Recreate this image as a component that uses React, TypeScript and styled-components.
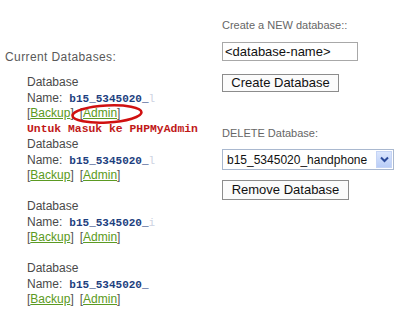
import React, { FC } from 'react';
import styled, { createGlobalStyle } from 'styled-components';

const GlobalStyle = createGlobalStyle`
  body {
    margin: 0;
    background: #ffffff;
    font-family: "Liberation Sans", Arial, sans-serif;
  }
`;

interface DbEntry {
  name: string;
  tail: string;
  note?: string;
}

const databases: DbEntry[] = [
  { name: 'b15_5345020_', tail: 'l', note: 'Untuk Masuk ke PHPMyAdmin' },
  { name: 'b15_5345020_', tail: 'l' },
  { name: 'b15_5345020_', tail: 'i' },
  { name: 'b15_5345020_', tail: '' },
];

const Page = styled.div`
  display: flex;
  width: 400px;
  height: 326px;
  overflow: hidden;
`;

const LeftColumn = styled.div`
  width: 222px;
  padding: 49px 0 0 5px;
  box-sizing: border-box;
`;

const Heading = styled.div`
  font-size: 12px;
  line-height: 16px;
  color: #5a5a5a;
  letter-spacing: 0.4px;
`;

const DbList = styled.div`
  margin: 10px 0 0 22px;
`;

const DbBlock = styled.div`
  position: relative;
  height: 62px;
`;

const Line = styled.div`
  height: 15.5px;
  line-height: 15.5px;
  font-size: 12px;
  color: #4a4a4a;
  white-space: nowrap;
`;

const DbName = styled.span`
  font-family: "Liberation Mono", "Courier New", monospace;
  font-weight: bold;
  font-size: 11px;
  color: #1d3f80;
  margin-left: 7px;
`;

const FadedTail = styled.span`
  font-family: "Liberation Mono", "Courier New", monospace;
  font-size: 11px;
  color: #cdd3e2;
`;

const LinkGroup = styled.span<{ $gap?: number }>`
  color: #555;
  margin-left: ${(p) => p.$gap ?? 0}px;
`;

const LinkText = styled.a`
  color: #5b9a22;
  text-decoration: underline;
  cursor: pointer;
`;

const Note = styled.div`
  height: 15.5px;
  line-height: 15.5px;
  font-family: "Liberation Mono", "Courier New", monospace;
  font-weight: bold;
  font-size: 11.4px;
  color: #c01818;
  white-space: nowrap;
`;

const Circle = styled.svg`
  position: absolute;
  left: 43px;
  top: 28px;
  pointer-events: none;
`;

const RightColumn = styled.div`
  flex: 1;
  padding-top: 18px;
`;

const Label = styled.div<{ $gap?: number }>`
  font-size: 11px;
  line-height: 14px;
  color: #666;
  margin-top: ${(p) => p.$gap ?? 0}px;
`;

const TextInput = styled.div`
  box-sizing: border-box;
  width: 136px;
  height: 19px;
  margin-top: 10px;
  border: 1px solid #a8a8a8;
  padding: 0 2px;
  font-size: 13px;
  line-height: 17px;
  color: #111;
`;

const Button = styled.div<{ $width: number; $height: number; $gap: number }>`
  box-sizing: border-box;
  width: ${(p) => p.$width}px;
  height: ${(p) => p.$height}px;
  margin-top: ${(p) => p.$gap}px;
  border: 1px solid #8c8c8c;
  background: #fbfbfb;
  font-size: 13px;
  line-height: ${(p) => p.$height - 2}px;
  text-align: center;
  color: #111;
`;

const SelectBox = styled.div`
  box-sizing: border-box;
  display: flex;
  align-items: center;
  width: 172px;
  height: 21px;
  margin-top: 9px;
  border: 1px solid #a9b8cf;
  padding: 1px;
`;

const SelectValue = styled.div`
  flex: 1;
  padding-left: 3px;
  font-size: 12px;
  color: #111;
  white-space: nowrap;
`;

const ArrowButton = styled.div`
  width: 16px;
  height: 17px;
  display: flex;
  align-items: center;
  justify-content: center;
  background: linear-gradient(#dbe6fd, #b9cdf7);
  border: 1px solid #c5d4f5;
  box-sizing: border-box;
`;

const DbItem: FC<{ db: DbEntry; marked?: boolean }> = ({ db, marked }) => (
  <DbBlock>
    <Line>Database</Line>
    <Line>
      Name:
      <DbName>{db.name}</DbName>
      {db.tail && <FadedTail>{db.tail}</FadedTail>}
    </Line>
    <Line>
      <LinkGroup>
        [<LinkText>Backup</LinkText>]
      </LinkGroup>
      <LinkGroup $gap={6}>
        [<LinkText>Admin</LinkText>]
      </LinkGroup>
    </Line>
    {db.note && <Note>{db.note}</Note>}
    {marked && (
      <Circle width="74" height="22" viewBox="0 0 74 22">
        <ellipse
          cx="37"
          cy="11"
          rx="34.5"
          ry="8.5"
          fill="none"
          stroke="#d01010"
          strokeWidth="2.6"
          transform="rotate(-3 37 11)"
        />
      </Circle>
    )}
  </DbBlock>
);

export default function App() {
  return (
    <>
      <GlobalStyle />
      <Page>
        <LeftColumn>
          <Heading>Current Databases:</Heading>
          <DbList>
            {databases.map((db, i) => (
              <DbItem key={i} db={db} marked={i === 0} />
            ))}
          </DbList>
        </LeftColumn>
        <RightColumn>
          <Label>Create a NEW database::</Label>
          <TextInput>&lt;database-name&gt;</TextInput>
          <Button $width={117} $height={18} $gap={13}>
            Create Database
          </Button>
          <Label $gap={34}>DELETE Database:</Label>
          <SelectBox>
            <SelectValue>b15_5345020_handphone</SelectValue>
            <ArrowButton>
              <svg width="9" height="7" viewBox="0 0 9 7">
                <path d="M1 1.5 L4.5 5 L8 1.5" fill="none" stroke="#2b4a9a" strokeWidth="2" />
              </svg>
            </ArrowButton>
          </SelectBox>
          <Button $width={127} $height={20} $gap={10}>
            Remove Database
          </Button>
        </RightColumn>
      </Page>
    </>
  );
}
